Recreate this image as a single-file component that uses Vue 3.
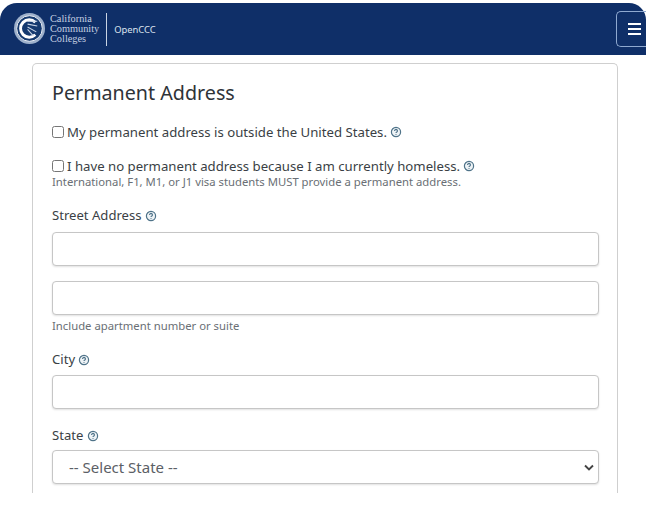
<script setup>
const lines = ['California', 'Community', 'Colleges']
</script>

<template>
  <div class="page">
    <header class="topbar">
      <div class="brand">
        <svg class="seal" width="33" height="33" viewBox="0 0 34 34" aria-hidden="true">
          <circle cx="17" cy="17" r="16" fill="#9db0cb" />
          <circle cx="17" cy="17" r="13.2" fill="#14396f" stroke="#eef2f7" stroke-width="1" />
          <path d="M23 10.5A9 9 0 1 0 23 23.5" fill="none" stroke="#ffffff" stroke-width="3" />
          <path d="M15 9.5h10M15 12.5l10 2M15 15.5l9 5M15 18l6 6.5" stroke="#c9d5e6" stroke-width="1.1" fill="none" />
        </svg>
        <div class="wordmark">
          <span v-for="line in lines" :key="line">{{ line }}</span>
        </div>
        <div class="divider"></div>
        <span class="product">OpenCCC</span>
      </div>
      <button class="menu" type="button" aria-label="Menu">
        <span></span><span></span><span></span>
      </button>
    </header>

    <main class="card">
      <h1>Permanent Address</h1>

      <label class="check first">
        <input type="checkbox" />
        <span>My permanent address is outside the United States.</span>
        <svg class="help" viewBox="0 0 12 12"><circle cx="6" cy="6" r="4.6" /><path d="M4.6 4.9a1.4 1.4 0 1 1 2.2 1.1c-.5.3-.8.6-.8 1.1M6 8.3v.6" /></svg>
      </label>

      <label class="check second">
        <input type="checkbox" />
        <span>I have no permanent address because I am currently homeless.</span>
        <svg class="help" viewBox="0 0 12 12"><circle cx="6" cy="6" r="4.6" /><path d="M4.6 4.9a1.4 1.4 0 1 1 2.2 1.1c-.5.3-.8.6-.8 1.1M6 8.3v.6" /></svg>
      </label>
      <p class="note tight">International, F1, M1, or J1 visa students MUST provide a permanent address.</p>

      <div class="label street">
        Street Address
        <svg class="help" viewBox="0 0 12 12"><circle cx="6" cy="6" r="4.6" /><path d="M4.6 4.9a1.4 1.4 0 1 1 2.2 1.1c-.5.3-.8.6-.8 1.1M6 8.3v.6" /></svg>
      </div>
      <input class="field" type="text" />
      <input class="field line2" type="text" />
      <p class="note hint">Include apartment number or suite</p>

      <div class="label city">
        City
        <svg class="help" viewBox="0 0 12 12"><circle cx="6" cy="6" r="4.6" /><path d="M4.6 4.9a1.4 1.4 0 1 1 2.2 1.1c-.5.3-.8.6-.8 1.1M6 8.3v.6" /></svg>
      </div>
      <input class="field" type="text" />

      <div class="label state">
        State
        <svg class="help" viewBox="0 0 12 12"><circle cx="6" cy="6" r="4.6" /><path d="M4.6 4.9a1.4 1.4 0 1 1 2.2 1.1c-.5.3-.8.6-.8 1.1M6 8.3v.6" /></svg>
      </div>
      <div class="select">
        <span>-- Select State --</span>
        <svg width="10" height="7" viewBox="0 0 10 7"><path d="M1 1.5l4 4 4-4" fill="none" stroke="#444" stroke-width="1.9" /></svg>
      </div>
    </main>
  </div>
</template>

<style>
html, body { margin: 0; background: #fff; }
</style>

<style scoped>
.page {
  width: 646px;
  height: 510px;
  overflow: hidden;
  padding-top: 3px;
  box-sizing: border-box;
  background: #fff;
  font-family: "Noto Sans", "Open Sans", sans-serif;
  color: #3a3f45;
}
.topbar {
  height: 52px;
  background: #0f2f68;
  border-radius: 17px 17px 0 0;
  display: flex;
  align-items: center;
  justify-content: space-between;
}
.brand { display: flex; align-items: center; margin-left: 13px; }
.seal { flex: none; margin-top: -2px; }
.wordmark {
  margin-left: 4px;
  display: flex;
  flex-direction: column;
  font: 10.3px/9.8px "Liberation Serif", serif;
  color: #c5d0e1;
}
.divider { width: 1px; height: 33px; background: #c9d4e4; margin-left: 7px; }
.product { margin-left: 7px; font-size: 9.4px; color: #dbe3ee; }
.menu {
  width: 30px;
  height: 36px;
  padding: 0 0 0 11px;
  margin: 0;
  box-sizing: border-box;
  border: 1px solid #8fa9d0;
  border-right: 0;
  border-radius: 5px 0 0 5px;
  background: transparent;
  display: flex;
  flex-direction: column;
  justify-content: center;
  gap: 2.6px;
}
.menu span { display: block; width: 13px; height: 2px; background: #fff; }
.card {
  width: 586px;
  height: 430px;
  margin: 8px 0 0 32px;
  box-sizing: border-box;
  border: 1px solid #cfcfcf;
  border-bottom: 0;
  border-radius: 5px 5px 0 0;
  padding: 0 18px 0 19px;
  overflow: hidden;
}
h1 {
  margin: 14px 0 0;
  font-size: 19.7px;
  line-height: 30px;
  font-weight: 400;
  color: #2f3338;
}
.check { display: flex; align-items: center; font-size: 13.2px; line-height: 18px; }
.check input { width: 12px; height: 12px; margin: 0 3px 0 0; flex: none; }
.first { margin-top: 15px; }
.second { margin-top: 16px; }
.help {
  width: 12px;
  height: 12px;
  margin-left: 3px;
  fill: #eef3f6;
  stroke: #4f7389;
  stroke-width: 1.2;
  vertical-align: -2px;
}
.help path { fill: none; }
.note { margin: 0; font-size: 11.3px; line-height: 14px; color: #6a6f75; }
.tight { margin-top: 0; }
.label { font-size: 13.1px; line-height: 18px; }
.label .help { margin-left: 0; }
.street { margin-top: 17px; }
.field, .select {
  display: block;
  width: 547px;
  height: 34px;
  margin: 0;
  box-sizing: border-box;
  border: 1px solid #c6c6c6;
  border-radius: 4px;
  background: #fff;
  box-shadow: 0 1px 2px rgba(0, 0, 0, .12);
}
.street + .field { margin-top: 8px; }
.line2 { margin-top: 15px; }
.hint { margin-top: 4px; }
.city { margin-top: 17px; }
.city + .field { margin-top: 7px; }
.state { margin-top: 17px; }
.select {
  margin-top: 6px;
  display: flex;
  align-items: center;
  justify-content: space-between;
  padding: 0 4px 0 16px;
  font-size: 15px;
  color: #5b6066;
}
</style>
